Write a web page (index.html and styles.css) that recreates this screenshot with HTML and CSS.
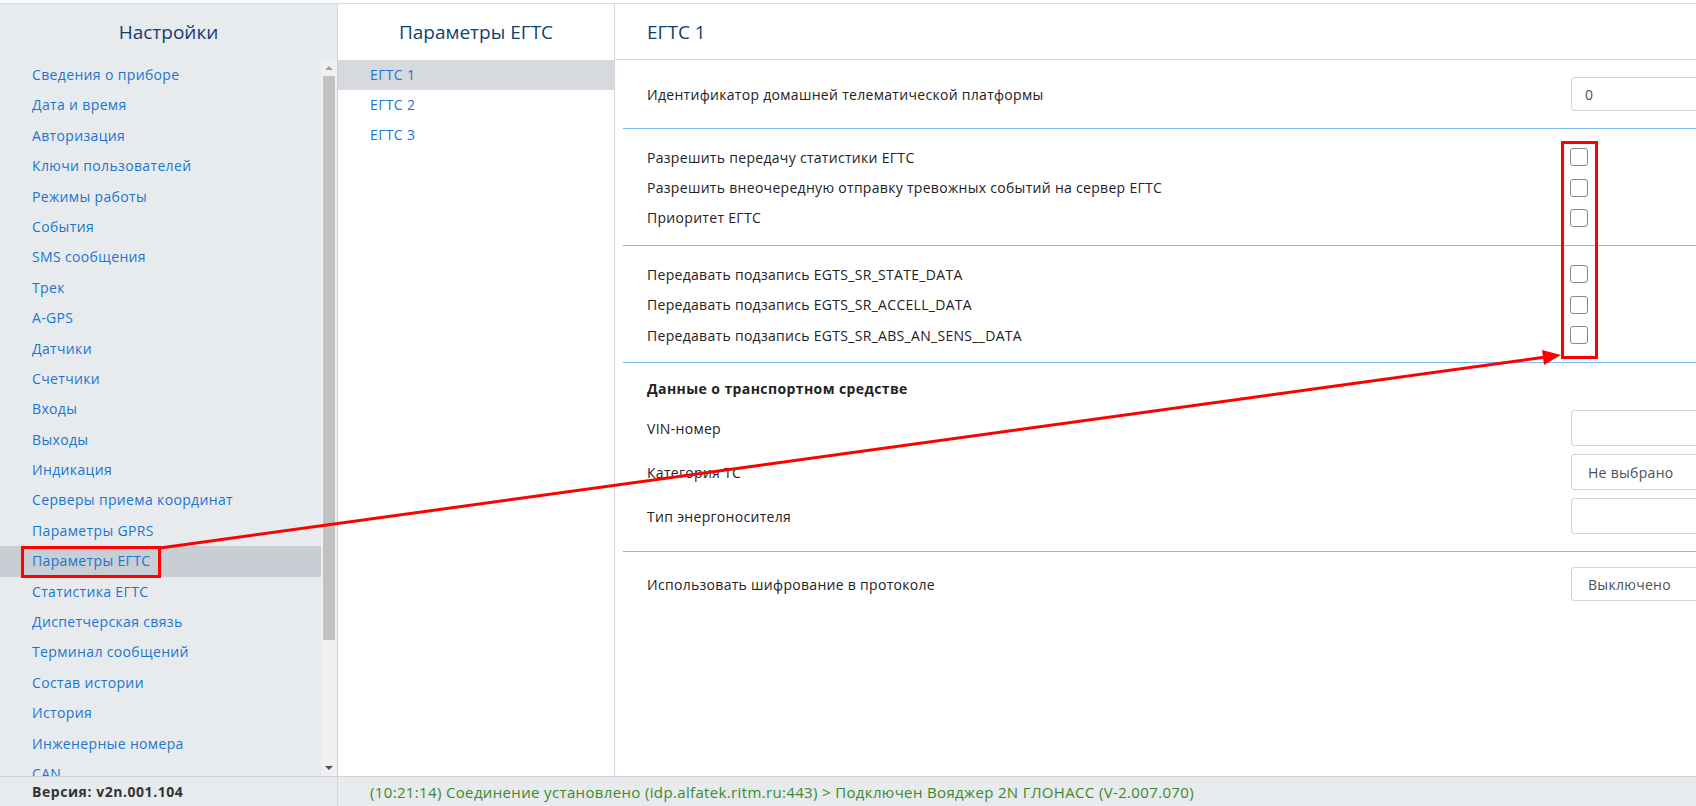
FILE: index.html
```html
<!DOCTYPE html>
<html lang="ru">
<head>
<meta charset="utf-8">
<title>Настройки</title>
<link rel="stylesheet" href="styles.css">
</head>
<body>
<div class="app">
  <div class="top">
    <aside class="sidebar">
      <div class="panel-title">Настройки</div>
      <div class="side-body">
        <ul class="side-list">
          <li>Сведения о приборе</li>
          <li>Дата и время</li>
          <li>Авторизация</li>
          <li>Ключи пользователей</li>
          <li>Режимы работы</li>
          <li>События</li>
          <li>SMS сообщения</li>
          <li>Трек</li>
          <li>A-GPS</li>
          <li>Датчики</li>
          <li>Счетчики</li>
          <li>Входы</li>
          <li>Выходы</li>
          <li>Индикация</li>
          <li>Серверы приема координат</li>
          <li>Параметры GPRS</li>
          <li class="active">Параметры ЕГТС</li>
          <li>Статистика ЕГТС</li>
          <li>Диспетчерская связь</li>
          <li>Терминал сообщений</li>
          <li>Состав истории</li>
          <li>История</li>
          <li>Инженерные номера</li>
          <li class="cut">CAN</li>
        </ul>
        <div class="scrollbar">
          <div class="sb-btn"><span class="tri-up"></span></div>
          <div class="sb-track"><div class="sb-thumb"></div></div>
          <div class="sb-btn"><span class="tri-down"></span></div>
        </div>
      </div>
    </aside>
    <nav class="middle">
      <div class="panel-title">Параметры ЕГТС</div>
      <ul class="mid-list">
        <li class="active">ЕГТС 1</li>
        <li>ЕГТС 2</li>
        <li>ЕГТС 3</li>
      </ul>
    </nav>
    <main class="main">
      <div class="main-title">ЕГТС 1</div>
      <div class="main-body">
        <section class="sec sec-first">
          <div class="row row-input">
            <span class="label">Идентификатор домашней телематической платформы</span>
            <div class="input">0</div>
          </div>
        </section>
        <section class="sec sec-checks">
          <div class="row"><span class="label">Разрешить передачу статистики ЕГТС</span><span class="check"></span></div>
          <div class="row"><span class="label">Разрешить внеочередную отправку тревожных событий на сервер ЕГТС</span><span class="check"></span></div>
          <div class="row"><span class="label">Приоритет ЕГТС</span><span class="check"></span></div>
        </section>
        <section class="sec sec-checks">
          <div class="row"><span class="label">Передавать подзапись EGTS_SR_STATE_DATA</span><span class="check"></span></div>
          <div class="row"><span class="label">Передавать подзапись EGTS_SR_ACCELL_DATA</span><span class="check"></span></div>
          <div class="row"><span class="label">Передавать подзапись EGTS_SR_ABS_AN_SENS__DATA</span><span class="check"></span></div>
        </section>
        <section class="sec sec-vehicle">
          <div class="sec-heading">Данные о транспортном средстве</div>
          <div class="row row-field"><span class="label">VIN-номер</span><div class="input"></div></div>
          <div class="row row-field"><span class="label">Категория ТС</span><div class="input select">Не выбрано</div></div>
          <div class="row row-field"><span class="label">Тип энергоносителя</span><div class="input"></div></div>
        </section>
        <section class="sec sec-last">
          <div class="row row-input"><span class="label">Использовать шифрование в протоколе</span><div class="input select">Выключено</div></div>
        </section>
      </div>
    </main>
  </div>
  <footer class="footer">
    <div class="version">Версия: v2n.001.104</div>
    <div class="status">(10:21:14) Соединение установлено (idp.alfatek.ritm.ru:443) &gt; Подключен Вояджер 2N ГЛОНАСС (V-2.007.070)</div>
  </footer>
</div>
<svg class="annot" width="1696" height="806" viewBox="0 0 1696 806">
  <rect x="22.5" y="547.5" width="137" height="29" fill="none" stroke="#ff0000" stroke-width="3"/>
  <rect x="1562.5" y="142.5" width="34" height="215" fill="none" stroke="#ff0000" stroke-width="3"/>
  <line x1="160" y1="548" x2="1546" y2="357" stroke="#ff0000" stroke-width="3"/>
  <polygon points="1561,355 1544,365 1542,350" fill="#ff0000"/>
</svg>
</body>
</html>
```

FILE: styles.css
```css
* { box-sizing: border-box; }
html, body { margin: 0; padding: 0; }
body {
  width: 1696px;
  height: 806px;
  overflow: hidden;
  background: #ffffff;
  font-family: "Open Sans", "Noto Sans", sans-serif;
  font-size: 14px;
  color: #222;
  position: relative;
  padding-top: 3px;
}
ul { list-style: none; margin: 0; padding: 0; }
.app {
  height: 803px;
  display: flex;
  flex-direction: column;
  border-top: 1px solid #d9dce0;
}
.top {
  flex: 1;
  display: flex;
  min-height: 0;
}
.sidebar {
  width: 338px;
  flex: none;
  background: #e8ebee;
  border-right: 1px solid #cfd3d9;
  display: flex;
  flex-direction: column;
  min-height: 0;
}
.panel-title {
  height: 56px;
  flex: none;
  display: flex;
  align-items: center;
  justify-content: center;
  font-size: 19px;
  font-weight: 500;
  color: #0f3f70;
}
.side-body {
  flex: 1;
  min-height: 0;
  display: flex;
}
.side-list {
  flex: 1;
  overflow: hidden;
}
.side-list li {
  height: 30.4px;
  line-height: 30.4px;
  padding-left: 32px;
  color: #1a75d2;
  white-space: nowrap;
  letter-spacing: 0.35px;
}
.side-list li.cut {
  height: 23px;
  overflow: hidden;
}
.side-list li.active { background: #c9cdd4; }
.scrollbar {
  width: 16px;
  flex: none;
  background: #f0f0f0;
  display: flex;
  flex-direction: column;
}
.sb-btn {
  height: 16px;
  flex: none;
  display: flex;
  align-items: center;
  justify-content: center;
}
.tri-up {
  width: 0; height: 0;
  border-left: 4px solid transparent;
  border-right: 4px solid transparent;
  border-bottom: 4px solid #a3a3a3;
}
.tri-down {
  width: 0; height: 0;
  border-left: 4px solid transparent;
  border-right: 4px solid transparent;
  border-top: 4px solid #505050;
}
.sb-track {
  flex: 1;
  padding: 0 2px;
}
.sb-thumb {
  height: 564px;
  background: #c1c1c1;
}
.middle {
  width: 277px;
  flex: none;
  border-right: 1px solid #d3d6da;
  background: #fff;
}
.mid-list li {
  height: 30px;
  line-height: 30px;
  padding-left: 32px;
  color: #1a75d2;
  letter-spacing: 0.35px;
}
.mid-list li.active { background: #d6d9de; }
.main {
  flex: 1;
  min-width: 0;
  overflow: hidden;
  display: flex;
  flex-direction: column;
}
.main-title {
  height: 56px;
  flex: none;
  display: flex;
  align-items: center;
  padding-left: 32px;
  font-size: 19px;
  font-weight: 500;
  color: #0f3f70;
  border-bottom: 1px solid #d6d9dd;
}
.main-body {
  padding-left: 8px;
  width: 1200px;
}
.sec {
  border-top: 1px solid #7dbdf5;
  padding-left: 24px;
}
.sec-first { border-top: none; padding-top: 17px; padding-bottom: 17px; }
.sec-checks { padding-top: 13px; padding-bottom: 12px; }
.sec-vehicle { padding-top: 13px; padding-bottom: 17px; }
.sec-last { padding-top: 15px; padding-bottom: 15px; }
.row {
  display: grid;
  grid-template-columns: 924px 200px;
  align-items: center;
  height: 30.4px;
}
.label { white-space: nowrap; letter-spacing: 0.3px; }
.row-input { height: 34px; }
.row-field { height: 36px; margin-top: 8px; }
.row-field:first-of-type { margin-top: 0; }
.sec-heading {
  font-weight: 700;
  height: 26px;
  line-height: 26px;
  margin-bottom: 6px;
  letter-spacing: 0.4px;
}
.input {
  height: 100%;
  border: 1px solid #ced4da;
  border-right: none;
  border-radius: 4px 0 0 4px;
  padding-left: 13px;
  display: flex;
  align-items: center;
  color: #495057;
  letter-spacing: 0.3px;
}
.input.select { padding-left: 16px; }
.check {
  width: 18px;
  height: 18px;
  border: 1px solid #8a8a8a;
  border-radius: 3px;
  margin-left: -1px;
}
.footer {
  height: 30px;
  flex: none;
  display: flex;
  background: #e8ebee;
  border-top: 1px solid #cfd3d9;
}
.version {
  width: 338px;
  flex: none;
  padding-left: 32px;
  display: flex;
  align-items: center;
  font-weight: 700;
  color: #333;
  letter-spacing: 0.55px;
  border-right: 1px solid #d3d6da;
}
.status {
  padding-left: 32px;
  display: flex;
  align-items: center;
  color: #3a8a2a;
  font-size: 15px;
  letter-spacing: 0.35px;
  white-space: nowrap;
}
.annot {
  position: absolute;
  left: 0;
  top: 0;
  pointer-events: none;
}
```
